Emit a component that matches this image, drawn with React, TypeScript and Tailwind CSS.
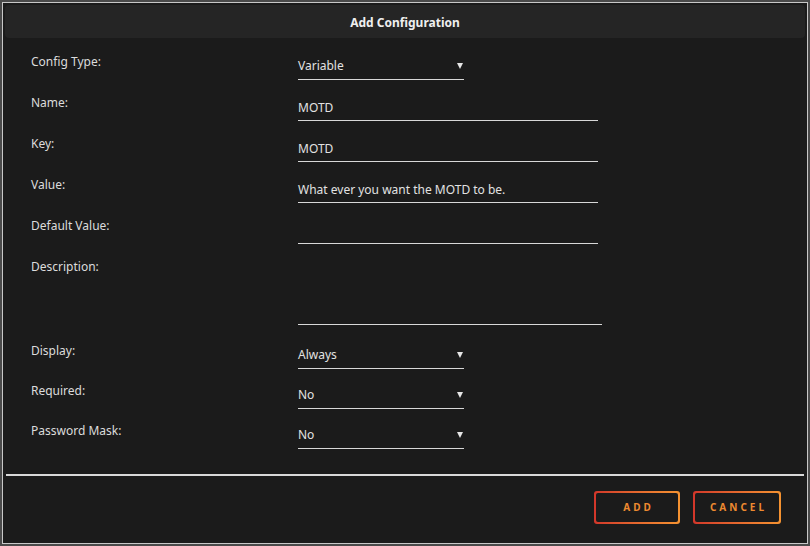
import React from 'react';

const fields = [
  { label: 'Config Type:', value: 'Variable', kind: 'select' },
  { label: 'Name:', value: 'MOTD', kind: 'text' },
  { label: 'Key:', value: 'MOTD', kind: 'text' },
  { label: 'Value:', value: 'What ever you want the MOTD to be.', kind: 'text' },
  { label: 'Default Value:', value: '', kind: 'text' },
];

const bottomFields = [
  { label: 'Display:', value: 'Always' },
  { label: 'Required:', value: 'No' },
  { label: 'Password Mask:', value: 'No' },
];

const Arrow = () => (
  <svg width="6" height="7" viewBox="0 0 6 7">
    <path d="M0 1 L6 1 L3 7 Z" fill="#e5e5e5" />
  </svg>
);

const SelectBox = ({ value }: { value: string }) => (
  <div className="w-[166px] h-[30px] pt-[8px] border-b border-[#d8d8d8] flex items-start justify-between">
    <span className="leading-[16px]">{value}</span>
    <span className="mt-[4px] mr-[1px]"><Arrow /></span>
  </div>
);

const TextBox = ({ value }: { value: string }) => (
  <div className="w-[300px] h-[30px] pt-[8px] border-b border-[#d8d8d8]">
    <span className="leading-[16px]">{value}</span>
  </div>
);

const Label = ({ children }: { children: React.ReactNode }) => (
  <div className="w-[267px] pt-[4px] leading-[16px] text-[#dcdcdc]">{children}</div>
);

const OutlineButton = ({ label, width }: { label: string; width: string }) => (
  <div className={`${width} h-[33px] p-[2px] rounded-[3px] bg-gradient-to-r from-[#d2362a] to-[#f59331]`}>
    <div className="w-full h-full rounded-[2px] bg-[#1b1b1b] flex items-center justify-center">
      <span className="text-[10px] font-bold tracking-[3px] text-[#ee8a30] pl-[3px]">{label}</span>
    </div>
  </div>
);

export default function App() {
  return (
    <div className="w-[810px] h-[546px] bg-[#4a4a4a] p-[2px]" style={{ fontFamily: '"Noto Sans", "Open Sans", sans-serif' }}>
      <div className="w-[806px] h-[542px] border border-[#c8c8c8] bg-[#1b1b1b] text-[12px] text-[#e2e2e2] flex flex-col">
        {/* Header */}
        <div className="mx-[2px] mt-[2px] h-[33px] pt-[2px] rounded-[4px] bg-[#252525] flex items-center justify-center">
          <span className="font-bold text-[12px] text-[#efefef]">Add Configuration</span>
        </div>

        <div className="pl-[28px] pt-[12px] flex flex-col">
          {fields.map((f, i) => (
            <div key={i} className="flex mb-[11px]">
              <Label>{f.label}</Label>
              {f.kind === 'select' ? <SelectBox value={f.value} /> : <TextBox value={f.value} />}
            </div>
          ))}

          {/* Description */}
          <div className="flex">
            <Label>Description:</Label>
            <div className="w-[304px] h-[70px] border-b border-[#d8d8d8]" />
          </div>

          {bottomFields.map((f, i) => (
            <div key={i} className={`flex ${i === 0 ? 'mt-[14px]' : 'mt-[10px]'}`}>
              <Label>{f.label}</Label>
              <SelectBox value={f.value} />
            </div>
          ))}
        </div>

        <div className="mx-[3px] mt-[25px] h-[2px] bg-[#d8d8d8]" />

        <div className="flex justify-end gap-[13px] pr-[26px] pt-[15px]">
          <OutlineButton label="ADD" width="w-[86px]" />
          <OutlineButton label="CANCEL" width="w-[88px]" />
        </div>
      </div>
    </div>
  );
}
